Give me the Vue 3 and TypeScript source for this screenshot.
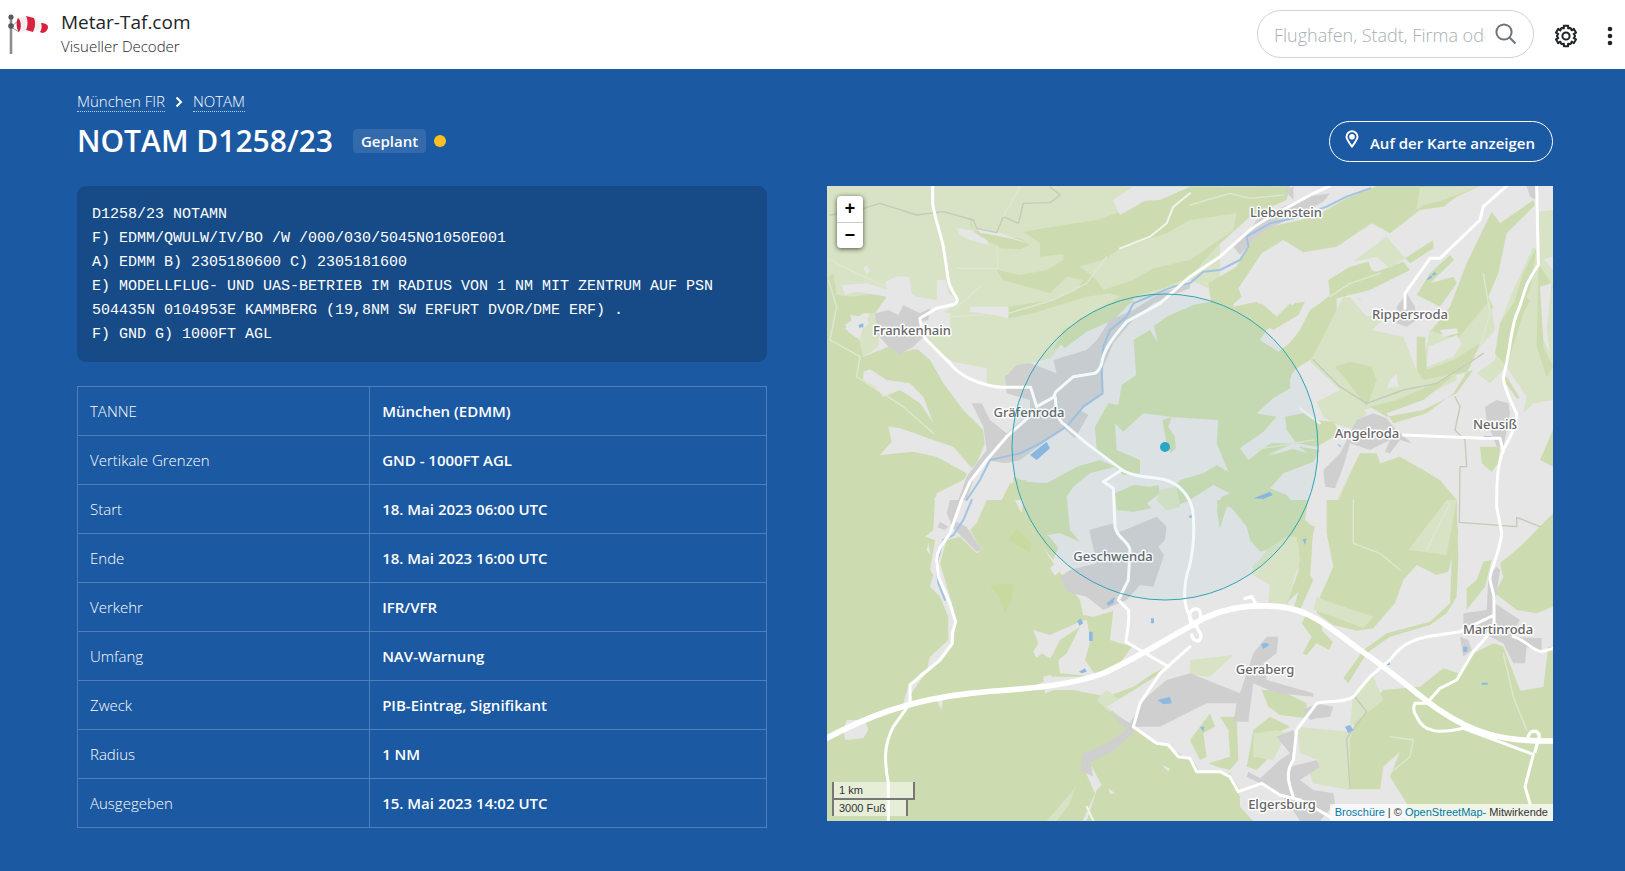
<script setup lang="ts">
import { ref } from 'vue'

interface Row {
  label: string
  value: string
}

interface Place {
  name: string
  x: number
  y: number
}

const query = ref('')

const notam = [
  'D1258/23 NOTAMN',
  'F) EDMM/QWULW/IV/BO /W /000/030/5045N01050E001',
  'A) EDMM B) 2305180600 C) 2305181600',
  'E) MODELLFLUG- UND UAS-BETRIEB IM RADIUS VON 1 NM MIT ZENTRUM AUF PSN',
  '504435N 0104953E KAMMBERG (19,8NM SW ERFURT DVOR/DME ERF) .',
  'F) GND G) 1000FT AGL',
].join('\n')

const rows: Row[] = [
  { label: 'TANNE', value: 'München (EDMM)' },
  { label: 'Vertikale Grenzen', value: 'GND - 1000FT AGL' },
  { label: 'Start', value: '18. Mai 2023 06:00 UTC' },
  { label: 'Ende', value: '18. Mai 2023 16:00 UTC' },
  { label: 'Verkehr', value: 'IFR/VFR' },
  { label: 'Umfang', value: 'NAV-Warnung' },
  { label: 'Zweck', value: 'PIB-Eintrag, Signifikant' },
  { label: 'Radius', value: '1 NM' },
  { label: 'Ausgegeben', value: '15. Mai 2023 14:02 UTC' },
]

const places: Place[] = [
  { name: 'Liebenstein', x: 459, y: 31 },
  { name: 'Rippersroda', x: 583, y: 133 },
  { name: 'Frankenhain', x: 85, y: 149 },
  { name: 'Gräfenroda', x: 202, y: 231 },
  { name: 'Angelroda', x: 540, y: 252 },
  { name: 'Neusiß', x: 668, y: 243 },
  { name: 'Geschwenda', x: 286, y: 375 },
  { name: 'Martinroda', x: 671, y: 448 },
  { name: 'Geraberg', x: 438, y: 488 },
  { name: 'Elgersburg', x: 455, y: 623 },
]

/* Outline of a cog with six teeth around the centre of a 24-unit box. */
function cog(): string {
  const points: string[] = []
  for (let tooth = 0; tooth < 6; tooth++) {
    const steps: [number, number][] = [[-27, 9], [-15, 8], [-12, 10.6], [12, 10.6], [15, 8], [27, 9]]
    for (const [offset, radius] of steps) {
      const angle = ((tooth * 60 - 90 + offset) * Math.PI) / 180
      points.push(`${(12 + radius * Math.cos(angle)).toFixed(2)} ${(12 + radius * Math.sin(angle)).toFixed(2)}`)
    }
  }
  return `M${points.join('L')}Z`
}
const cogPath = cog()
</script>

<template>
  <div class="page">
    <header class="topbar">
      <a class="brand" href="#">
        <svg class="logo" viewBox="0 0 48 42" aria-hidden="true">
          <path d="M11 3v38" stroke="#8b8d90" stroke-width="2.6" />
          <path d="M11 14l8-7M11 14l8 5" stroke="#9a9a9a" fill="none" />
          <path d="M18 5l8-2v15l-7 1z" fill="#efefef" />
          <path d="M18 5c3 2 4 10 1 14-3-3-3-11-1-14z" fill="#cf1f3f" />
          <path d="M26 3l8 2c3 4 2 10-1 14l-7-2c2-4 2-10 0-14z" fill="#d9203f" />
          <path d="M34 5l7 4-1 8-7 2c2-4 3-9 1-14z" fill="#f1f1f1" />
          <path d="M41 10c3 0 7 1 7 4s-3 6-6 6l-2-1c2-3 2-6 1-9z" fill="#d9203f" />
          <circle cx="11" cy="4" r="2.6" fill="#55585c" />
          <circle cx="11" cy="13" r="2.8" fill="#55585c" />
        </svg>
        <span class="names">
          <strong>Metar-Taf.com</strong>
          <small>Visueller Decoder</small>
        </span>
      </a>
      <div class="tools">
        <form class="search" role="search" @submit.prevent>
          <input v-model="query" type="text" aria-label="Suche" placeholder="Flughafen, Stadt, Firma oder">
          <button type="submit" aria-label="Suchen">
            <svg viewBox="0 0 22 22" aria-hidden="true"><circle cx="9" cy="9" r="7.6" /><path d="M14.500 14.500l6 6" /></svg>
          </button>
        </form>
        <button class="tool" type="button" aria-label="Einstellungen">
          <svg class="cog" viewBox="0 0 24 24" aria-hidden="true"><path :d="cogPath" /><circle cx="12" cy="12" r="3.600" /></svg>
        </button>
        <button class="tool more" type="button" aria-label="Menü">
          <svg class="dots" viewBox="0 0 6 20" aria-hidden="true"><circle cx="3" cy="3" r="2.300" /><circle cx="3" cy="10" r="2.300" /><circle cx="3" cy="17" r="2.300" /></svg>
        </button>
      </div>
    </header>

    <main class="content">
      <nav class="crumbs" aria-label="Pfad">
        <a href="#">München FIR</a>
        <svg viewBox="0 0 8 12" aria-hidden="true"><path d="M1.500 1.500L6 6l-4.500 4.500" /></svg>
        <a href="#">NOTAM</a>
      </nav>

      <div class="heading">
        <h1>NOTAM D1258/23</h1>
        <span class="badge">Geplant</span>
        <span class="status"></span>
        <a class="show" href="#">
          <svg viewBox="0 0 14 18" aria-hidden="true"><path d="M7 16.500C4 12.500 1.500 9.500 1.500 6.800a5.500 5.500 0 0 1 11 0C12.500 9.500 10 12.500 7 16.500z" /><circle cx="7" cy="6.800" r="2.800" /></svg>
          <span>Auf der Karte anzeigen</span>
        </a>
      </div>

      <div class="columns">
        <section>
          <pre class="notam">{{ notam }}</pre>
          <table class="facts">
            <tbody>
              <tr v-for="row in rows" :key="row.label">
                <th scope="row">{{ row.label }}</th>
                <td>{{ row.value }}</td>
              </tr>
            </tbody>
          </table>
        </section>

        <section class="map" aria-label="Karte">
          <svg class="canvas" viewBox="0 0 726 635" preserveAspectRatio="xMidYMid slice">
            <svg width="726" height="635" viewBox="21 18 2178 1905" preserveAspectRatio="none">
              <rect class="open" width="2220" height="1950" />
              <!-- north-west -->
              <path class="meadow" d="M0 0H1200V330L1000 345 880 372 760 450 690 535 610 555 560 580 555 625 500 615 500 565 400 545 330 500 200 400 0 345Z" />
              <path class="wood" d="M0 310L40 280 50 345 100 350 165 340 200 350 170 400 130 400 75 435 90 460 120 480 130 530 205 500 240 520 290 505 330 540 370 610 430 690 490 750 495 800 470 850 430 900 350 940 345 1010 320 1110 350 1150 330 1220 360 1250 385 1310 390 1370 380 1400 320 1470 270 1520 260 1570 0 1700Z" />
              <path class="wood" d="M610 155L700 140 830 120 950 78 980 58 1110 20 1410 18 1400 60 1290 110 1190 200 1110 290 1030 325 940 350 850 390 750 470 700 510 730 450 830 390 900 350 870 340 800 350 640 400 565 415 565 380 700 360 770 330 790 300 740 290 690 340 620 320 550 300 530 270 600 285 680 270 730 240 730 222 660 230 660 190Z" />
              <path class="wood" d="M450 105L460 150 540 170 600 175 630 195 600 208 545 205 480 170 452 140Z" />
              <path class="wood" d="M720 490L780 430 850 390 940 350 935 385 900 420 830 450 800 475 735 505Z" />
              <path class="meadow" d="M780 260L860 235 900 205 1040 160 1110 120 1250 100 1240 150 1110 240 1000 265 940 300 850 330 830 300Z" />
              <path class="meadow" d="M130 440L150 400 180 400 175 500 130 530 118 480Z" />
              <path class="open" d="M65 315L140 310 200 328 195 305 235 288 268 290 275 340 290 350 350 360 352 300 378 300 385 340 412 360 412 375 370 395 392 402 390 440 390 475 360 460 320 470 345 530 300 510 230 500 200 440 165 400 200 350 110 335 75 345Z" />
              <path class="open" d="M75 445L95 420 90 405 130 410 148 430 130 445 100 450 90 460ZM410 145L450 150 500 180 505 195 450 180 420 165ZM450 380L565 380 565 415 520 405 450 395ZM470 145L530 155 625 190 550 170 480 158ZM878 60L940 20H1110L1020 60 975 62 900 105ZM130 265L140 255 150 272 140 282Z" />
              <path class="open" d="M345 530L390 545 500 565 500 615 630 620 650 660 590 740 540 790 500 820 440 880 420 960 340 960 355 940 430 905 470 850 495 790 490 745 430 690 375 610Z" />
              <path class="open" d="M130 575L150 568 200 600 270 610 310 650 340 730 300 670 240 630 190 650 165 620 130 600ZM205 740L240 745 340 780 400 800 460 870 440 880 350 830 280 815 180 825 215 785Z" />
              <!-- valley and central clearings -->
              <path class="open" d="M1110 300L1200 340 1040 380 980 450 945 490 950 600 900 640 900 690 870 670 830 730 830 820 900 870 870 960 750 960 760 1050 740 1090 760 1300 890 1420 920 1420 940 1480 840 1575 900 1580 990 1530 1200 1400 1340 1200 1310 1110 1250 1010 1190 970 1110 1000 1000 960 900 1010 700 900 600 950 540 960 480 900 540 820 640 770 640 620 690 560 740 500 800 455 880 420 930 370Z" />
              <g transform="translate(540 300)">
                <path class="wood" d="M400 180L450 150 473 187 462 138 500 110 580 75 630 65 640 30 700 60 700 80 770 65 830 110 870 70 890 90 800 150 780 180 835 215 880 180 920 130 960 70 1010 30V230L930 240 880 270 870 300 870 325 820 355 770 400 830 410 790 455 720 505 745 540 810 490 890 490 800 530 900 500 960 510 940 545 850 580 810 625 860 645 890 680 905 735 860 790 780 815 750 780 740 740 700 690 680 670 660 745 650 690 665 650 690 640 640 615 560 665 520 680 510 640 540 600 610 580 650 555 685 575 650 490 655 420 520 412 430 400 370 455 345 430 350 510 420 540 420 580 370 585 290 510 285 440 325 370 355 375 365 315 408 285 405 230Z" />
                <path class="wood" d="M140 610L230 560 300 540 345 560 270 580 220 620 200 650 210 750 240 785 180 760 140 765 180 790 160 840 110 780 40 630 40 590 80 605ZM345 640L400 615 450 620 475 615 480 640 440 670 455 685 400 695 350 690Z" />
                <path class="wood" d="M487 420L515 412 505 440 525 470 527 505 512 520 498 480Z" />
                <path class="meadow" d="M480 630L530 620 540 680 500 692 470 660ZM800 810L900 740 920 850 890 870 860 940 870 990 830 970 820 920 750 880Z" />
                <path class="wood" d="M890 735L945 738 925 810 920 870 940 900 900 990 880 990 905 900 890 820 870 790 905 780Z" />
                <path class="open" d="M725 500L870 415 850 440 880 470 820 485 745 535ZM800 525L880 490 925 520 870 505ZM875 220L990 120 980 170 900 205Z" />
              </g>
              <!-- north-east -->
              <g transform="translate(1110 0)">
                <path class="wood" d="M400 95L470 55 560 18H870L800 50 760 80 690 90 600 160 545 130 440 200 340 217 280 180 215 220 145 325 155 350 120 382 60 350 55 310 140 260 180 190 240 140 330 120Z" />
                <path class="meadow" d="M690 22L870 18 760 60 700 75 680 90Z" />
                <path class="wood" d="M175 405L215 370 262 412 315 370 345 365 325 405 250 450ZM290 500L330 450 360 390 420 350 415 300 480 260 535 245 545 270 560 275 640 245 660 270 540 330 420 360 440 400 420 460 380 500 340 550 280 600 240 600Z" />
                <path class="meadow" d="M490 245L590 170 645 235 600 265 560 230ZM390 490L460 350 545 360 560 400 620 460 680 480 700 560 790 540 800 600 700 650 620 660 520 690 430 610 360 545Z" />
                <path class="wood" d="M645 235L730 180 730 205 660 250ZM435 560L480 545 545 560 560 600 530 680 470 600ZM680 345L720 280 780 225 792 240 720 310 790 290 800 310 750 380Z" />
                <path class="open" d="M470 340L510 360 545 340 560 400 530 410ZM545 450L600 400 650 430 690 450 680 575 640 470ZM600 600L620 580 625 620 590 625Z" />
                <path class="wood" d="M905 95L930 130 1030 60 1035 75 950 160 925 280 895 350 910 380 860 490 800 480 720 455 780 380 830 250Z" />
                <path class="meadow" d="M720 450L800 480 900 360 915 450 870 500 850 530 730 590 690 600ZM1030 200L1089 270V660L1030 670 1000 700 1010 650 950 560 900 610 860 580 915 540 930 430 970 330ZM1045 95L1089 90V230L1050 240Z" />
                <path class="wood" d="M680 470L705 470 710 570 790 540 870 490 840 560 790 640 710 700 610 730 590 700 700 660 800 580 700 600 680 570ZM700 690L800 640 850 570 780 590 620 660 540 680 590 710ZM950 560L1000 400 1020 360 990 340 930 430 915 520ZM1045 250L1089 320 1060 380 1060 500 1089 560 1070 590 1040 500ZM1040 200L1000 280 940 470 960 440 1020 330ZM950 590L990 655 980 655 940 600Z" />
                <path class="open" d="M715 500L800 465 815 490 790 530 710 562ZM750 450L800 445 805 460 760 470ZM1050 320L1085 310 1070 450 1080 520 1060 480Z" />
                <path class="meadow" d="M380 665L470 620 530 700 500 750 430 730 400 710ZM490 860L510 830 560 840 540 930 440 960Z" />
                <path class="wood" d="M285 710L340 700 370 720 430 725 450 760 380 800 320 790 290 750ZM430 1000L460 930 490 860 510 820 560 820 570 850 630 830 700 870 750 900 800 960V1000ZM870 800L930 800 925 850 905 875 875 850ZM1089 750L1050 840 1089 860Z" />
              </g>
              <!-- south-west -->
              <g transform="translate(0 960)">
                <path class="wood" d="M0 740L60 700 260 600 400 400 400 330 340 210 320 100 345 0H600L640 100 700 190 780 300 790 345 880 330 870 420 935 440 900 490 850 530 790 530 700 530 640 560 640 570 760 570 860 590 940 560 1000 520 1040 500 940 680 1110 780H1480V963H0Z" />
                <path class="wood" d="M540 10L570 -50 620 -60 610 40 560 60Z" />
                <path class="open" d="M345 0H500L470 70 450 90 485 150 470 160 420 110 380 120 360 190 390 290 408 360 400 430 360 480 300 520 270 560 275 600 295 610 370 590 365 630 350 600 250 610 265 560 320 510 330 470 385 420 385 330 370 270 330 210 345 120 315 110 340 90ZM70 690L80 660 135 660 145 690 130 715 75 720ZM585 0L610 0 605 40ZM690 205L715 182 728 205 705 227ZM640 390L690 405 770 370 800 360 812 420 795 480 830 530 720 520 715 480 740 460 780 380 720 420 700 460 690 475 665 460 650 475 640 455 655 430ZM670 530L690 525 720 545 760 550 675 580ZM685 105L735 115 775 130 780 170 720 150ZM775 285L810 265 880 300 890 330 820 350 790 345 790 310ZM715 485L730 478 745 518 720 510ZM790 800L815 800 845 855 830 870 800 963H788L825 880ZM1025 795L1050 805 1045 815ZM865 865L885 880 870 882Z" />
                <path class="meadow" d="M830 600L860 570 900 600 870 640ZM680 963L760 870 770 850 750 910 710 963Z" />
                <path class="thicket" d="M565 120L590 85 635 130 630 160 600 140ZM510 255L580 250 575 300 555 335 535 290Z" />
              </g>
              <!-- south-east -->
              <path class="open" d="M860 1580L990 1500 1110 1420 1240 1400 1500 1300 1600 1500 1700 1550 1620 1600 1590 1650 1580 1830 1700 1840 1750 1923H1500L1300 1923 1260 1880 1260 1850 1230 1780 1140 1775 1100 1710 1000 1690 940 1640Z" />
              <g transform="translate(1110 960)">
                <path class="wood" d="M80 0H355L345 60 370 80 360 240 290 310 330 200 320 110 280 110 215 150 185 110 180 70 150 20 110 20 90 85ZM410 0H790L805 100 775 215 740 225 680 195 640 240 615 310 550 385 500 392 430 375 380 340 390 290 430 200 410 100Z" />
                <path class="wood" d="M800 0L805 180 800 290 770 340 720 375 600 410 530 460 475 550 460 535 520 450 590 400 720 365 780 310 785 180 780 0ZM335 370L350 340 400 365 395 390 428 425 418 450 380 430 350 465 338 460 365 410ZM215 570L270 570 350 610 350 655 270 645 235 620ZM880 185L905 180 885 260 830 330 830 265 860 240ZM915 280L940 230 930 190 990 140 1089 40V320L1040 340 980 330Z" />
                <path class="wood" d="M480 715L500 650 530 620 580 570 690 560 760 505 805 520 850 460 910 430 940 440 990 570 1060 560 1075 440 1089 440V963H640L600 890 590 830 570 870H480Z" />
                <path class="meadow" d="M655 150L770 0H800L770 165 700 155ZM185 200L290 110 325 130 330 180 290 310 235 310 240 250ZM380 290L430 310 550 350 520 385 430 350 370 330ZM0 480L130 465 60 530 0 525ZM490 580L550 530 580 600 530 640 480 680ZM320 680L480 695 480 870 370 850 350 800 385 780 330 760Z" />
                <path class="wood" d="M170 800L190 690 240 650 300 680 260 700 260 750 200 810ZM0 720L60 640 75 680 40 700 50 770 30 780 10 740ZM90 650H140L145 780 120 810 80 800 55 790 120 770 115 690ZM0 820L120 820 150 870 130 963H0Z" />
                <path class="meadow" d="M190 700L260 690 290 700 250 780 190 770Z" />
                <path class="open" d="M975 490L1060 445 1060 560 995 572ZM570 870L580 800 630 755 600 830 650 910 660 963 570 920ZM480 868L590 868 600 963H480Z" />
              </g>
              <!-- built-up areas -->
              <path class="town" d="M165 400L205 390 235 405 250 375 300 400 330 385 325 420 300 425 310 470 280 500 240 523 205 500 175 465ZM555 590L590 555 630 550 710 580 700 540 800 510 830 480 870 420 940 390 1020 340 1110 310 1110 325 1000 370 930 430 880 490 850 560 845 640 780 690 805 705 765 775 730 745 600 840 555 850 500 840 460 900 440 960 415 960 440 890 500 810 490 740 455 670 485 670 510 720 560 760 630 700 630 660 560 640Z" />
              <path class="town" d="M390 960H420L400 1020 440 1040 485 1110 470 1115 420 1065 400 1045 380 1000ZM360 1025L385 1040 375 1050 352 1042ZM808 1050L880 1030 890 1060 1010 1010 1040 1040 1035 1080 1015 1100 1032 1125 1000 1220 960 1215 920 1260 850 1290 800 1250 740 1235 720 1190 750 1170 830 1150ZM860 1590L930 1630 970 1560 1040 1500 1110 1480 1260 1540 1300 1420 1340 1370 1375 1370 1370 1420 1330 1450 1340 1500 1480 1540 1480 1550 1370 1540 1300 1510 1285 1625 1240 1625 1250 1570 1160 1570 1100 1600 1020 1640 940 1640 940 1660 870 1720 810 1745 820 1790 780 1770 790 1720 860 1690 920 1650Z" />
              <path class="town" d="M1240 200L1290 150 1310 120 1390 80 1460 50 1530 40 1510 65 1420 110 1340 150 1290 190 1260 225ZM1395 30L1420 20 1420 60ZM1730 380L1760 340 1785 380 1790 420 1760 440 1730 430ZM1995 680L2030 660 2065 670 2070 700 2060 750 2050 800 2030 800 2000 720ZM1610 720L1660 700 1700 715 1720 740 1775 790 1740 780 1710 820 1695 815 1710 780 1650 810 1590 790 1570 860 1545 925 1515 920 1510 870 1560 820ZM2120 18H2150V60L2130 50Z" />
              <path class="town" d="M1930 1300L2000 1290 2005 1190 2030 1160 2040 1170 2025 1270 2100 1320 2070 1370 2165 1375 2165 1420 2120 1400 2115 1450 2080 1450 2050 1390 1990 1360 1930 1340ZM1450 1590L1490 1570 1540 1580 1530 1610 1490 1615 1470 1620ZM1370 1670L1420 1650 1430 1690 1410 1760 1490 1740 1500 1760 1440 1800 1480 1830 1540 1840 1545 1870 1500 1923H1440L1400 1860 1320 1810 1280 1790 1285 1775 1320 1795 1380 1740 1410 1720ZM1920 1370L1945 1380 1955 1410 1930 1430Z" />
              <!-- boundaries and tracks -->
              <path class="edge" d="M30 105L100 95 180 70 290 105 370 95 460 120 470 145 530 158 550 110 595 130 610 70 690 68 720 45 690 20M1480 540L1560 620 1640 670 1750 630 1850 610 1960 540 1990 520M1905 650L1920 680 1905 750 1935 780 1940 860 1920 860 1918 1027 2090 1040 2090 1012 2160 1040M1600 1545L1640 1595 1580 1675 1590 1825" />
              <path class="track" d="M25 300L50 380 30 480 120 530 110 590 250 680 340 760M30 240L130 290 200 320M385 410L490 405M400 390L480 320M530 200L535 265 410 265M565 400L700 360 800 310 860 230M600 20L550 110M1110 75L1230 40 1290 55 1390 45M1530 350L1590 310 1680 280M1600 960L1600 1090 1680 1120 1740 1170M1480 780L1300 810M1980 500L2010 400 1990 280M2050 1420L2080 1550 2120 1650M1710 1670L1780 1680 1770 1730 1710 1780M1820 1110L1890 970" />
              <!-- water -->
              <path class="stream" d="M440 960L480 900 510 840 600 820 660 790 740 740 790 680 848 640 845 560 850 500 870 450 920 410 940 370 1000 345 1060 320 1110 310 1150 275 1200 270 1260 240 1285 200 1280 170 1350 130 1420 115 1520 80 1580 50 1650 25M455 960L430 1020 400 1065 370 1080 350 1150 355 1210 375 1260" />
              <path class="water" d="M630 825L680 785 690 805 650 840ZM115 435L130 430 130 442 118 443ZM1300 955L1350 935 1358 945 1330 957ZM1820 298L1832 286 1838 292 1825 300ZM1835 283L1845 276 1850 282 1840 288ZM1992 768H2015V776H1990ZM1550 793L1560 795 1565 803ZM860 1270L885 1250 880 1270 865 1278ZM772 1323L782 1315 790 1330 778 1337ZM807 1355H818V1383H807ZM777 1475L795 1465 800 1475 785 1480ZM1013 1560L1050 1550 1055 1570 1030 1573ZM1323 1392L1340 1388 1348 1395 1330 1407ZM1575 1640L1590 1635 1600 1650 1585 1660ZM1700 1447L1710 1443 1710 1455 1700 1455ZM1140 1640L1153 1640 1150 1655ZM1448 1078L1460 1075 1455 1095ZM1985 1508H2003V1514H1985ZM1930 1400H1942V1415H1930ZM993 1315H1002V1330H993ZM1105 1010L1120 1000 1115 1015Z" />
              <!-- roads -->
              <path class="road" d="M338 18V70C345 120 365 170 370 200L385 300C390 330 408 345 412 360Q410 372 395 375L350 385 300 415Q300 430 315 475L390 550C420 590 480 615 540 622H632L650 680M650 680L700 652 708 635 760 590 825 580Q840 570 845 550C850 510 880 470 920 425L1020 370 1110 290 1200 230 1290 150C1340 110 1430 70 1480 40L1530 18M425 960L450 905 500 840 560 770 650 690M706 652L708 680C710 710 725 730 735 735L800 790 900 865C930 890 990 890 1030 898C1080 910 1110 950 1118 990C1125 1050 1120 1110 1108 1160C1090 1210 1090 1270 1105 1300L1120 1330M905 870L850 905 880 925 885 1040C890 1075 925 1080 930 1110L925 1200 895 1260 925 1290C930 1330 920 1360 918 1385L985 1425 1045 1460" />
              <path class="road" d="M425 960L390 1060C370 1090 350 1110 350 1140L355 1190 390 1270 407 1325 397 1360V1390L360 1440 270 1515V1570L220 1640C195 1690 190 1730 205 1810V1923M1110 1400L1020 1480 960 1570 940 1640 1010 1690 1045 1695 1075 1730 1110 1735 1130 1775 1200 1775 1230 1790 1255 1835 1325 1810 1380 1845 1440 1860 1530 1910M2060 18L1990 80 1980 120 1860 235 1830 235 1755 340 1755 385M2150 18L2155 255C2110 320 2115 340 2095 390C2070 440 2075 500 2050 590C2050 620 2075 670 2090 700C2090 740 2065 780 2050 810C2030 860 2030 920 2030 980L2045 1060C2040 1120 2005 1180 2010 1200L2022 1250V1330M1750 765L1990 775 2040 775 2050 815M2022 1330L2000 1370 1960 1415 1910 1500 1860 1525 1820 1570 1785 1570Q1775 1590 1790 1610C1810 1660 1860 1660 1930 1645L2140 1723 2115 1820 2130 1870M2022 1305L1920 1355 1820 1370C1770 1380 1740 1400 1710 1440L1650 1490 1600 1550C1570 1570 1530 1560 1490 1570L1430 1650 1420 1740C1400 1770 1400 1800 1420 1850M2080 1370C2120 1380 2130 1410 2165 1415L2199 1405" />
              <path class="road minor" d="M820 1923L800 1880M1110 40L1060 80 1040 130 990 170 900 205M1500 730L1440 685" />
              <path class="motorway" d="M0 1685C130 1615 260 1560 450 1540C600 1525 720 1525 850 1480C970 1425 1050 1370 1150 1316C1230 1278 1300 1274 1380 1280C1480 1290 1550 1360 1620 1410C1710 1470 1800 1550 1850 1585C1960 1660 2040 1685 2199 1683" />
              <path class="ramp" d="M1120 1340C1100 1310 1110 1290 1125 1287S1145 1305 1140 1320C1115 1345 1145 1350 1143 1370S1120 1385 1115 1365M1275 1255L1295 1250 1310 1275M2125 1680C2120 1650 2155 1645 2158 1668L2145 1715" />
            </svg>
            <g class="places">
              <text v-for="place in places" :key="place.name" :x="place.x" :y="place.y">{{ place.name }}</text>
            </g>
            <circle class="radius" cx="338" cy="261" r="153" />
            <circle class="centre" cx="338" cy="261" r="5" />
          </svg>
          <div class="zoom">
            <button type="button" aria-label="Vergrößern">+</button>
            <button type="button" aria-label="Verkleinern">−</button>
          </div>
          <div class="scale">
            <span class="metric">1 km</span>
            <span class="imperial">3000 Fuß</span>
          </div>
          <p class="credits"><a href="#">Broschüre</a> | © <a href="#">OpenStreetMap-</a> Mitwirkende</p>
        </section>
      </div>
    </main>
  </div>
</template>

<style>
body {
  margin: 0;
  background: #1b59a2;
}
</style>

<style scoped>
* {
  box-sizing: border-box;
}

.page {
  min-height: 100vh;
  background: #1b59a2;
  color: #fff;
  font: 300 15px/24px "Segoe UI", "Open Sans", sans-serif;
}

button {
  padding: 0;
  border: 0;
  background: none;
  color: inherit;
  font: inherit;
}

a {
  color: inherit;
  text-decoration: none;
}

.topbar {
  display: flex;
  align-items: center;
  justify-content: space-between;
  height: 69px;
  padding: 0 12px 0 0;
  background: #fff;
  color: #212529;
}

.brand {
  display: flex;
  align-items: center;
  gap: 13px;
}

.logo {
  width: 48px;
  height: 42px;
  margin-bottom: 2px;
  fill: none;
}

.names {
  display: flex;
  flex-direction: column;
  margin-bottom: 2px;
}

.names strong {
  font-size: 19px;
  font-weight: 500;
}

.names small {
  font-size: 15px;
}

.tools {
  display: flex;
  align-items: center;
  gap: 20px;
}

.search {
  display: flex;
  align-items: center;
  gap: 10px;
  width: 277px;
  height: 48px;
  margin-bottom: 2px;
  padding: 0 16px;
  border: 1px solid #ced4da;
  border-radius: 24px;
}

.search input {
  flex: 1;
  min-width: 0;
  padding: 2px 0 0;
  border: 0;
  outline: 0;
  background: none;
  color: #212529;
  font: inherit;
  font-size: 18px;
}

.search input::placeholder {
  color: #a9afb5;
  opacity: 1;
}

.search svg {
  display: block;
  width: 22px;
  height: 22px;
  fill: none;
  stroke: #6c757d;
  stroke-width: 2;
}

.tool {
  padding-top: 2px;
}

.tool svg {
  display: block;
  fill: none;
  stroke: #212529;
}

.tool .cog {
  width: 24px;
  height: 24px;
  stroke-width: 2;
  stroke-linejoin: round;
}

.more {
  padding-left: 9px;
}

.tool .dots {
  width: 6px;
  height: 20px;
  fill: #212529;
  stroke: none;
}

.content {
  padding: 22px 72px 24px 77px;
}

.crumbs {
  display: flex;
  align-items: center;
  gap: 10px;
}

.crumbs a {
  border-bottom: 1px dotted #b9cde6;
  line-height: 20px;
}

.crumbs svg {
  width: 8px;
  height: 12px;
  fill: none;
  stroke: #fff;
  stroke-width: 2;
}

.heading {
  display: flex;
  align-items: center;
  height: 41px;
  margin: 8px 0 24px;
  padding-top: 1px;
}

h1 {
  margin: 0 20px 0 0;
  font-size: 30px;
  font-weight: 600;
  line-height: 40px;
}

.badge {
  padding: 0 8px;
  border-radius: 4px;
  background: #326aac;
  font-weight: 600;
}

.status {
  width: 12px;
  height: 12px;
  margin-left: 8px;
  border-radius: 50%;
  background: #fbbf24;
}

.show {
  display: flex;
  align-items: center;
  gap: 11px;
  height: 41px;
  margin-left: auto;
  padding: 0 17px 0 15px;
  border: 1px solid #fff;
  border-radius: 21px;
  font-weight: 600;
}

.show span {
  padding-top: 3px;
}

.show svg {
  width: 14px;
  height: 18px;
  margin-bottom: 4px;
  fill: #fff;
}

.show path {
  fill: none;
  stroke: #fff;
  stroke-width: 2;
}

.columns {
  display: grid;
  grid-template-columns: 690fr 726fr;
  align-items: start;
  gap: 60px;
  padding-top: 1px;
}

.notam {
  margin: 0 0 24px;
  padding: 17px 15px 15px;
  border-radius: 9px;
  background: #164b88;
  font: 15px/24px Consolas, "Liberation Mono", monospace;
  white-space: pre-wrap;
}

.facts {
  width: 100%;
  border-collapse: collapse;
  table-layout: fixed;
}

.facts th,
.facts td {
  height: 49px;
  padding: 0 12px;
  border: 1px solid #4c7fbc;
  text-align: left;
}

.facts th {
  width: 42.4%;
  font-weight: 300;
}

.facts td {
  font-weight: 600;
}

.map {
  position: relative;
  aspect-ratio: 726 / 635;
  overflow: hidden;
  color: #333;
  font: 11px/17px "Helvetica Neue", "Liberation Sans", Arial, sans-serif;
}

.canvas {
  display: block;
  width: 100%;
  height: 100%;
}

.open {
  fill: #e6e6e6;
}

.meadow {
  fill: #d7e3c4;
}

.wood {
  fill: #cddcb0;
}

.thicket {
  fill: #c7dba1;
}

.town {
  fill: #cfcfd0;
}

.water {
  fill: #8db9e2;
}

.stream,
.edge,
.track,
.road,
.motorway,
.ramp {
  fill: none;
  stroke-linejoin: round;
  stroke-linecap: round;
}

.stream {
  stroke: #a3c3e2;
  stroke-width: 6;
}

.edge {
  stroke: #c3cbb8;
  stroke-width: 4;
}

.track {
  stroke: #dfe7d2;
  stroke-width: 4;
}

.road {
  stroke: #fff;
  stroke-width: 9;
}

.road.minor {
  stroke: #f2f4ec;
  stroke-width: 6;
}

.motorway {
  stroke: #fff;
  stroke-width: 17;
}

.ramp {
  stroke: #fff;
  stroke-width: 10;
}

.places {
  fill: #666;
  stroke: #fff;
  stroke-width: 3;
  stroke-linejoin: round;
  paint-order: stroke;
  font: 500 13px "Noto Sans", sans-serif;
  text-anchor: middle;
}

.radius {
  fill: #2fa5c5;
  fill-opacity: 0.05;
  stroke: #2fa5b5;
  stroke-width: 1;
}

.centre {
  fill: #2ba6c4;
}

.zoom {
  position: absolute;
  top: 10px;
  left: 10px;
  width: 26px;
  overflow: hidden;
  border-radius: 4px;
  background: #fff;
  box-shadow: 0 1px 5px rgba(0, 0, 0, 0.65);
  color: #000;
  font: bold 18px/26px "Liberation Mono", monospace;
}

.zoom button {
  display: block;
  width: 100%;
  height: 26px;
}

.zoom button + button {
  border-top: 1px solid #ccc;
}

.scale {
  position: absolute;
  bottom: 5px;
  left: 5px;
  line-height: 14px;
}

.scale span {
  display: block;
  padding: 1px 5px;
  border: 2px solid #777;
  background: rgba(255, 255, 255, 0.5);
}

.scale .metric {
  width: 83px;
  border-top: 0;
}

.scale .imperial {
  width: 76px;
  margin-top: -2px;
  border-bottom: 0;
}

.credits {
  position: absolute;
  right: 0;
  bottom: 0;
  margin: 0;
  padding: 0 5px;
  background: rgba(255, 255, 255, 0.7);
}

.credits a {
  color: #0078a8;
}
</style>
